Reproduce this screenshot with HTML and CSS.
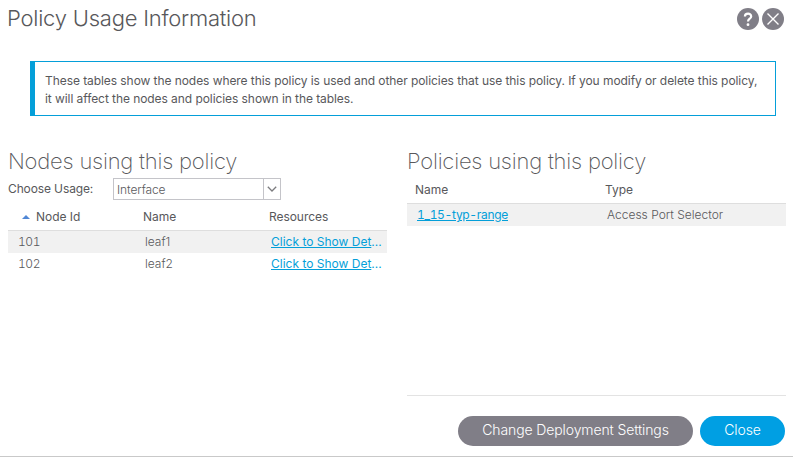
FILE: index.html
```html
<!DOCTYPE html>
<html lang="en">
<head>
<meta charset="utf-8">
<title>Policy Usage Information</title>
<link rel="stylesheet" href="styles.css">
</head>
<body>
<main class="dialog">
  <header class="header">
    <h1><span>Policy Usage Information</span></h1>
    <div class="tools">
      <svg width="22" height="22" viewBox="0 0 22 22"><circle cx="11" cy="11" r="11"/><path class="help" d="M7.9 8.6C7.9 4.6 14.2 4.6 14.2 8.4C14.2 10.7 11 10.7 11 13.4"/><circle class="dot" cx="11" cy="16.7" r="1.4"/></svg>
      <svg width="22" height="22" viewBox="0 0 22 22"><circle cx="11" cy="11" r="11"/><path d="M5.5 5.5l11 11M16.5 5.5l-11 11"/></svg>
    </div>
  </header>
  <p class="info"><span>These tables show the nodes where this policy is used and other policies that use this policy. If you modify or delete this policy,</span><br><span>it will affect the nodes and policies shown in the tables.</span></p>
  <div class="columns">
    <section>
      <h2><span>Nodes using this policy</span></h2>
      <div class="usage">
        <label>Choose Usage:</label>
        <div class="select"><span>Interface</span><i><svg width="10" height="6" viewBox="0 0 10 6"><path d="M.8.8L5 5L9.2.8"/></svg></i></div>
      </div>
      <div class="row head nodes"><span><svg class="sort" width="8" height="4" viewBox="0 0 8 4"><path d="M0 4L4 0L8 4z"/></svg>Node Id</span><span>Name</span><span>Resources</span></div>
      <div class="row nodes shaded"><span class="id">101</span><span>leaf1</span><span class="more"><a>Click to Show Det</a>...</span></div>
      <div class="row nodes"><span class="id">102</span><span>leaf2</span><span class="more"><a>Click to Show Det</a>...</span></div>
    </section>
    <section class="policies">
      <h2><span>Policies using this policy</span></h2>
      <div class="row head"><span>Name</span><span>Type</span></div>
      <div class="row shaded"><span><a class="range">1_15-typ-range</a></span><span>Access Port Selector</span></div>
    </section>
  </div>
  <footer class="footer">
    <button class="change">Change Deployment Settings</button>
    <button class="close">Close</button>
  </footer>
</main>
</body>
</html>
```
FILE: styles.css
```css
* { box-sizing: border-box; }
body { margin: 0; background: #fff; color: #58585b; font: 400 12px/18px Inter, "Liberation Sans", sans-serif; }
.dialog { width: 793px; height: 457px; border-bottom: 1px solid #c9c9c9; display: flex; flex-direction: column; overflow: hidden; }
.header { height: 61px; padding: 8px 9px 0 7px; display: flex; justify-content: space-between; align-items: flex-start; }
h1, h2 { margin: 0; font-weight: 300; font-size: 22px; line-height: 20px; letter-spacing: -.23px; white-space: nowrap; }
h2 { font-weight: 200; height: 28px; padding-top: 1px; letter-spacing: -.22px; }
.tools { display: flex; gap: 3px; }
.tools svg { fill: #807e87; }
.tools path { fill: none; stroke: #fff; stroke-width: 1.4; }
.tools .help { stroke-width: 2.2; }
.tools .dot { fill: #fff; }
.info { margin: 0 17px 0 30px; height: 55px; padding: 10px 0 0 10px; border: 1px solid #049fd9; border-left-width: 5px; white-space: nowrap; letter-spacing: -.068px; }
.columns { margin: 34px 7px 0 8px; height: 246px; display: grid; grid-template-columns: 379px 379px; gap: 20px; white-space: nowrap; }
.usage { display: flex; height: 22px; align-items: center; }
.usage label { width: 105px; letter-spacing: -.12px; }
.select { width: 168px; height: 22px; border: 1px solid #c4c4c9; display: flex; line-height: 21px; font-weight: 300; }
.select span { flex: 1; padding-left: 3px; letter-spacing: -.1px; }
.select i { width: 17px; border-left: 1px solid #c4c4c9; display: flex; align-items: center; justify-content: center; }
.select path { fill: none; stroke: #7b7b7e; stroke-width: 1.3; }
.row { display: grid; grid-template-columns: 190px 1fr; height: 22px; line-height: 22px; padding-left: 10px; font-weight: 300; }
.nodes { grid-template-columns: 127px 126px 1fr; }
.head { padding-left: 8px; border-bottom: 1px solid #dedede; font-weight: 400; letter-spacing: -.05px; }
.nodes.head { height: 31px; line-height: 33px; }
.policies .head { height: 26px; line-height: 24px; }
.sort { fill: #5087d5; margin: 0 6px 2px; }
.id, .range { font-variant-numeric: tabular-nums; }
.id { letter-spacing: -.4px; }
.shaded { background: #f1f1f1; }
a, .more { color: #049fd9; font-weight: 400; }
a { text-decoration: underline; }
.range { letter-spacing: -.31px; }
.policies { border-bottom: 1px solid #e3e3e3; }
.footer { display: flex; gap: 7px; justify-content: flex-end; padding: 20px 8px 0 0; }
button { height: 30px; border: 0; border-radius: 15px; padding: 0 0 2px; color: #fff; font: 300 14px/28px Inter, sans-serif; letter-spacing: -.11px; }
.change { width: 235px; background: #807e87; }
.close { width: 85px; background: #009fe3; }
```
